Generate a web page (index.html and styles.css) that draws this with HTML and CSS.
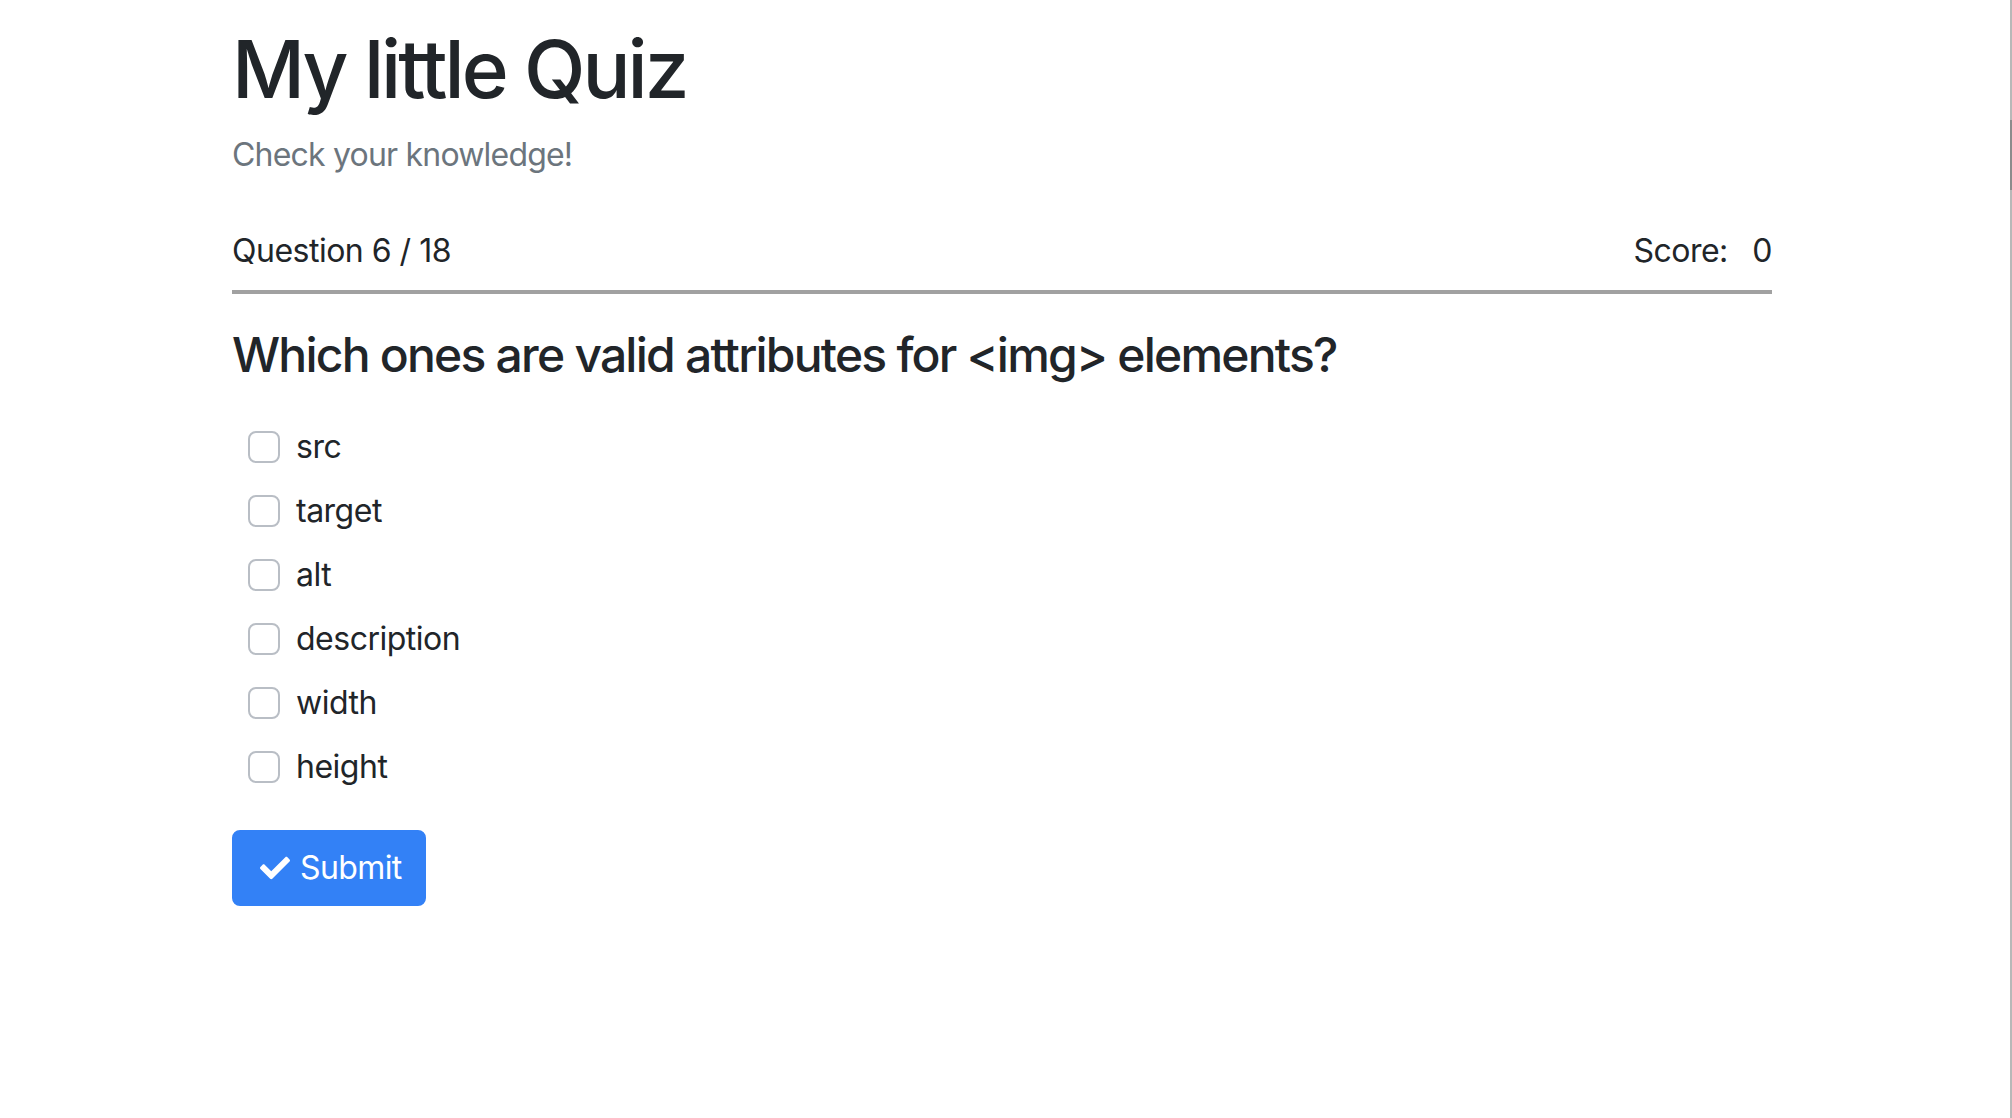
FILE: index.html
```html
<!DOCTYPE html>
<html lang="en">
<head>
<meta charset="utf-8">
<title>My little Quiz</title>
<link rel="stylesheet" href="styles.css">
</head>
<body>
<div class="edge"><div class="edge-thumb"></div></div>
<main class="container">
  <header class="intro">
    <h1 class="title">My little Quiz</h1>
    <p class="subtitle">Check your knowledge!</p>
  </header>
  <div class="status">
    <span class="progress">Question 6 / 18</span>
    <span class="score">Score: <span class="score-value">0</span></span>
  </div>
  <form class="quiz">
    <h4 class="question">Which ones are valid attributes for &lt;img&gt; elements?</h4>
    <div class="options">
      <label class="option"><input type="checkbox" class="check"><span>src</span></label>
      <label class="option"><input type="checkbox" class="check"><span>target</span></label>
      <label class="option"><input type="checkbox" class="check"><span>alt</span></label>
      <label class="option"><input type="checkbox" class="check"><span>description</span></label>
      <label class="option"><input type="checkbox" class="check"><span>width</span></label>
      <label class="option"><input type="checkbox" class="check"><span>height</span></label>
    </div>
    <button type="button" class="btn">
      <svg class="btn-icon" viewBox="0 0 512 512" aria-hidden="true"><path fill="currentColor" d="M173.898 439.404l-166.4-166.4c-9.997-9.997-9.997-26.206 0-36.204l36.203-36.204c9.997-9.998 26.207-9.998 36.204 0L192 312.69 432.095 72.596c9.997-9.997 26.207-9.997 36.204 0l36.203 36.204c9.997 9.997 9.997 26.206 0 36.204l-294.4 294.401c-9.998 9.997-26.207 9.997-36.204-.001z"/></svg>
      <span class="btn-text">Submit</span>
    </button>
  </form>
</main>
</body>
</html>
```

FILE: styles.css
```css
* { box-sizing: border-box; }
html, body { margin: 0; padding: 0; background: #fff; }
body {
  font-family: Inter, "Liberation Sans", sans-serif;
  font-size: 32px;
  line-height: 1.5;
  color: #212529;
  letter-spacing: -0.5px;
}
.container {
  width: 1540px;
  margin-left: 232px;
  padding-top: 21px;
}
.title {
  margin: 0 0 14px;
  font-size: 80px;
  line-height: 96px;
  font-weight: 500;
  letter-spacing: -3px;
}
.subtitle {
  margin: 0;
  color: #6c757d;
  letter-spacing: -0.8px;
}
.status {
  margin-top: 48px;
  display: flex;
  justify-content: space-between;
  padding-bottom: 15px;
  border-bottom: 4px solid #a1a1a1;
}
.score-value { margin-left: 16px; }
.question {
  margin: 32px 0 39px;
  font-size: 48px;
  line-height: 1.2;
  font-weight: 500;
  letter-spacing: -1.78px;
}
.options {
  display: flex;
  flex-direction: column;
  gap: 16px;
}
.option {
  display: flex;
  align-items: center;
  gap: 16px;
  padding-left: 16px;
  height: 48px;
}
.check {
  appearance: none;
  -webkit-appearance: none;
  margin: 0;
  width: 32px;
  height: 32px;
  border: 2px solid #b9bec5;
  border-radius: 8px;
  background: #fff;
}
.btn {
  margin-top: 39px;
  display: inline-flex;
  align-items: center;
  gap: 10px;
  height: 76px;
  width: 194px;
  padding: 12px 24px 12px 26px;
  border: 2px solid #3381f6;
  border-radius: 8px;
  background: #3381f6;
  color: #fff;
  font: inherit;
  font-size: 32px;
  line-height: 48px;
}
.btn-text { letter-spacing: -0.6px; }
.btn-icon { width: 30px; height: 30px; flex: none; }
.edge {
  position: fixed;
  top: 0;
  right: 0;
  width: 2px;
  height: 100%;
  background: #b8b8b8;
}
.edge-thumb {
  position: absolute;
  top: 120px;
  left: 0;
  width: 2px;
  height: 70px;
  background: #8c8c8c;
}
```
